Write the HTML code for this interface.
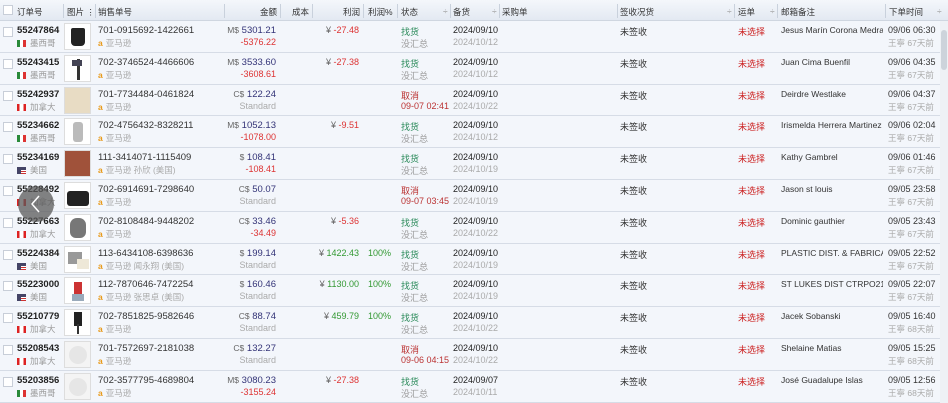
<!DOCTYPE html>
<html><head><meta charset="utf-8"><style>
*{margin:0;padding:0;box-sizing:border-box}
body{width:948px;height:403px;overflow:hidden;background:#f3f6fb;font-family:"Liberation Sans","Noto Sans CJK SC",sans-serif;font-size:9px;color:#333;position:relative}
.hd{position:absolute;left:0;top:0;width:948px;height:21px;background:linear-gradient(#f4f7fb,#e3e9f2);border-bottom:1px solid #cfd6e0}
.hd span{position:absolute;top:6px;font-size:8.5px;color:#333}
.hd i{position:absolute;top:4px;width:1px;height:14px;background:#c9d1dc}
.r{position:absolute;left:0;width:940px;height:31.8px;border-bottom:1px solid #d6dce6;background:#f3f6fb}
.r span{position:absolute;white-space:nowrap}
.t{top:4px}.b{top:16px}
.cb{left:3px;top:6px;width:10px;height:10px;border:1px solid #c8ced8;background:#fff}
.on{left:17px;font-weight:bold;color:#222;font-size:9.5px}
.fl{left:17px;width:9px;height:7px;top:19px!important}
.mx{background:linear-gradient(90deg,#2a8a3a 33%,#fff 33% 66%,#d33 66%)}
.ca{background:linear-gradient(90deg,#d22 28%,#fff 28% 72%,#d22 72%)}
.us{background:repeating-linear-gradient(#c33 0 1px,#fff 1px 2px);box-shadow:inset 4px 3px 0 #446}
.cn{left:30px;color:#999;font-size:8.5px}
.im{left:64px;top:2px;width:27px;height:27px;background:#fff;border:1px solid #ddd}
.so{left:98px;color:#333;font-size:9.5px}
.am{left:98px;color:#aaa;font-size:8.5px}
.am b{color:#e89a1a;font-weight:bold;margin-right:3px}
.amt{right:664px;color:#337;font-size:9.5px}
.amt em{font-style:normal;color:#666;font-size:8.5px}
.neg{right:664px;color:#d33}
.std{right:664px;color:#aaa}
.pf{right:581px;color:#666}
.pf em{font-style:normal;color:#d33}
.pf .g{color:#393}
.pc{left:368px;color:#393}
.st{left:401px;color:#2a8a5a}
.st.x{color:#b33}
.sb{left:401px;color:#999}
.sb.x{color:#b33}
.d1{left:453px;color:#222}
.d2{left:453px;color:#aaa}
.qs{left:620px;color:#333}
.ys{left:738px;color:#c22}
.em{left:781px;color:#333;font-size:8.5px;width:102px;overflow:hidden}
.tm{left:888px;color:#333;font-size:9px}
.tb{left:888px;color:#aaa;font-size:8.5px}
</style></head><body>
<div class="hd">
<span style="left:3px;top:5px;width:10px;height:10px;border:1px solid #c8ced8;background:#fff"></span>
<span style="left:17px">订单号</span><i style="left:63px"></i>
<span style="left:67px">图片 ⋮</span><i style="left:95px"></i>
<span style="left:98px">销售单号</span><i style="left:224px"></i>
<span style="left:260px">金额</span><i style="left:280px"></i>
<span style="left:292px">成本</span><i style="left:312px"></i>
<span style="left:343px">利润</span><i style="left:363px"></i>
<span style="left:368px">利润%</span><i style="left:397px"></i>
<span style="left:401px">状态</span><span style="left:443px;color:#999">÷</span><i style="left:450px"></i>
<span style="left:453px">备货</span><span style="left:492px;color:#999">÷</span><i style="left:499px"></i>
<span style="left:502px">采购单</span><i style="left:617px"></i>
<span style="left:620px">签收况货</span><span style="left:727px;color:#999">÷</span><i style="left:734px"></i>
<span style="left:738px">运单</span><span style="left:770px;color:#999">÷</span><i style="left:777px"></i>
<span style="left:781px">邮箱备注</span><i style="left:885px"></i>
<span style="left:889px">下单时间</span><span style="left:937px;color:#999">÷</span>
</div>

<div class="r" style="top:21px"><span class="cb"></span><span class="t on">55247864</span><span class="b fl mx"></span><span class="b cn">墨西哥</span><span class="im"><span style="left:6px;top:4px;width:14px;height:18px;background:#222;border-radius:2px 2px 4px 4px"></span></span><span class="t so">701-0915692-1422661</span><span class="b am"><b>a</b>亚马逊</span><span class="t amt"><em>M$</em> 5301.21</span><span class="b neg">-5376.22</span><span class="t pf">¥ <em>-27.48</em></span><span class="t st">找货</span><span class="b sb">没汇总</span><span class="t d1">2024/09/10</span><span class="b d2">2024/10/12</span><span class="t qs">未签收</span><span class="t ys">未选择</span><span class="t em">Jesus Marín Corona Medrar</span><span class="t tm">09/06 06:30</span><span class="b tb">王寧 67天前</span></div>

<div class="r" style="top:52.8px"><span class="cb"></span><span class="t on">55243415</span><span class="b fl mx"></span><span class="b cn">墨西哥</span><span class="im"><span style="left:12px;top:3px;width:3px;height:21px;background:#333"></span><span style="left:7px;top:4px;width:10px;height:6px;background:#445"></span></span><span class="t so">702-3746524-4466606</span><span class="b am"><b>a</b>亚马逊</span><span class="t amt"><em>M$</em> 3533.60</span><span class="b neg">-3608.61</span><span class="t pf">¥ <em>-27.38</em></span><span class="t st">找货</span><span class="b sb">没汇总</span><span class="t d1">2024/09/10</span><span class="b d2">2024/10/12</span><span class="t qs">未签收</span><span class="t ys">未选择</span><span class="t em">Juan Cima Buenfil</span><span class="t tm">09/06 04:35</span><span class="b tb">王寧 67天前</span></div>

<div class="r" style="top:84.6px"><span class="cb"></span><span class="t on">55242937</span><span class="b fl ca"></span><span class="b cn">加拿大</span><span class="im" style="background:#e8dcc4"></span><span class="t so">701-7734484-0461824</span><span class="b am"><b>a</b>亚马逊</span><span class="t amt"><em>C$</em> 122.24</span><span class="b std">Standard</span><span class="t st x">取消</span><span class="b sb x">09-07 02:41</span><span class="t d1">2024/09/10</span><span class="b d2">2024/10/22</span><span class="t qs">未签收</span><span class="t ys">未选择</span><span class="t em">Deirdre Westlake</span><span class="t tm">09/06 04:37</span><span class="b tb">王寧 67天前</span></div>

<div class="r" style="top:116.4px"><span class="cb"></span><span class="t on">55234662</span><span class="b fl mx"></span><span class="b cn">墨西哥</span><span class="im"><span style="left:8px;top:3px;width:10px;height:20px;background:#bbb;border-radius:3px"></span></span><span class="t so">702-4756432-8328211</span><span class="b am"><b>a</b>亚马逊</span><span class="t amt"><em>M$</em> 1052.13</span><span class="b neg">-1078.00</span><span class="t pf">¥ <em>-9.51</em></span><span class="t st">找货</span><span class="b sb">没汇总</span><span class="t d1">2024/09/10</span><span class="b d2">2024/10/12</span><span class="t qs">未签收</span><span class="t ys">未选择</span><span class="t em">Irismelda Herrera Martinez</span><span class="t tm">09/06 02:04</span><span class="b tb">王寧 67天前</span></div>

<div class="r" style="top:148.2px"><span class="cb"></span><span class="t on">55234169</span><span class="b fl us"></span><span class="b cn">美国</span><span class="im" style="background:#a0523a"></span><span class="t so">111-3414071-1115409</span><span class="b am"><b>a</b>亚马逊 孙欣 (美国)</span><span class="t amt"><em>$</em> 108.41</span><span class="b neg">-108.41</span><span class="t st">找货</span><span class="b sb">没汇总</span><span class="t d1">2024/09/10</span><span class="b d2">2024/10/19</span><span class="t qs">未签收</span><span class="t ys">未选择</span><span class="t em">Kathy Gambrel</span><span class="t tm">09/06 01:46</span><span class="b tb">王寧 67天前</span></div>

<div class="r" style="top:180px"><span class="cb"></span><span class="t on">55228492</span><span class="b fl ca"></span><span class="b cn">加拿大</span><span class="im"><span style="left:2px;top:8px;width:22px;height:15px;background:#222;border-radius:3px"></span></span><span class="t so">702-6914691-7298640</span><span class="b am"><b>a</b>亚马逊</span><span class="t amt"><em>C$</em> 50.07</span><span class="b std">Standard</span><span class="t st x">取消</span><span class="b sb x">09-07 03:45</span><span class="t d1">2024/09/10</span><span class="b d2">2024/10/19</span><span class="t qs">未签收</span><span class="t ys">未选择</span><span class="t em">Jason st louis</span><span class="t tm">09/05 23:58</span><span class="b tb">王寧 67天前</span></div>

<div class="r" style="top:211.8px"><span class="cb"></span><span class="t on">55227663</span><span class="b fl ca"></span><span class="b cn">加拿大</span><span class="im"><span style="left:5px;top:3px;width:16px;height:20px;background:#777;border-radius:7px 7px 6px 6px"></span></span><span class="t so">702-8108484-9448202</span><span class="b am"><b>a</b>亚马逊</span><span class="t amt"><em>C$</em> 33.46</span><span class="b neg">-34.49</span><span class="t pf">¥ <em>-5.36</em></span><span class="t st">找货</span><span class="b sb">没汇总</span><span class="t d1">2024/09/10</span><span class="b d2">2024/10/22</span><span class="t qs">未签收</span><span class="t ys">未选择</span><span class="t em">Dominic gauthier</span><span class="t tm">09/05 23:43</span><span class="b tb">王寧 67天前</span></div>

<div class="r" style="top:243.6px"><span class="cb"></span><span class="t on">55224384</span><span class="b fl us"></span><span class="b cn">美国</span><span class="im"><span style="left:3px;top:5px;width:14px;height:12px;background:#999"></span><span style="left:12px;top:12px;width:12px;height:10px;background:#eee8d8"></span></span><span class="t so">113-6434108-6398636</span><span class="b am"><b>a</b>亚马逊 闻永翔 (美国)</span><span class="t amt"><em>$</em> 199.14</span><span class="b std">Standard</span><span class="t pf">¥ <em class="g">1422.43</em></span><span class="t pc">100%</span><span class="t st">找货</span><span class="b sb">没汇总</span><span class="t d1">2024/09/10</span><span class="b d2">2024/10/19</span><span class="t qs">未签收</span><span class="t ys">未选择</span><span class="t em">PLASTIC DIST. &amp; FABRICATC</span><span class="t tm">09/05 22:52</span><span class="b tb">王寧 67天前</span></div>

<div class="r" style="top:275.4px"><span class="cb"></span><span class="t on">55223000</span><span class="b fl us"></span><span class="b cn">美国</span><span class="im"><span style="left:9px;top:4px;width:8px;height:12px;background:#c33"></span><span style="left:7px;top:16px;width:12px;height:7px;background:#9ab"></span></span><span class="t so">112-7870646-7472254</span><span class="b am"><b>a</b>亚马逊 张思卓 (美国)</span><span class="t amt"><em>$</em> 160.46</span><span class="b std">Standard</span><span class="t pf">¥ <em class="g">1130.00</em></span><span class="t pc">100%</span><span class="t st">找货</span><span class="b sb">没汇总</span><span class="t d1">2024/09/10</span><span class="b d2">2024/10/19</span><span class="t qs">未签收</span><span class="t ys">未选择</span><span class="t em">ST LUKES DIST CTRPO21331</span><span class="t tm">09/05 22:07</span><span class="b tb">王寧 67天前</span></div>

<div class="r" style="top:307.2px"><span class="cb"></span><span class="t on">55210779</span><span class="b fl ca"></span><span class="b cn">加拿大</span><span class="im"><span style="left:9px;top:2px;width:8px;height:14px;background:#222"></span><span style="left:12px;top:14px;width:2px;height:10px;background:#333"></span></span><span class="t so">702-7851825-9582646</span><span class="b am"><b>a</b>亚马逊</span><span class="t amt"><em>C$</em> 88.74</span><span class="b std">Standard</span><span class="t pf">¥ <em class="g">459.79</em></span><span class="t pc">100%</span><span class="t st">找货</span><span class="b sb">没汇总</span><span class="t d1">2024/09/10</span><span class="b d2">2024/10/22</span><span class="t qs">未签收</span><span class="t ys">未选择</span><span class="t em">Jacek Sobanski</span><span class="t tm">09/05 16:40</span><span class="b tb">王寧 68天前</span></div>

<div class="r" style="top:339px"><span class="cb"></span><span class="t on">55208543</span><span class="b fl ca"></span><span class="b cn">加拿大</span><span class="im" style="background:#f4f4f4"><span style="left:4px;top:4px;width:18px;height:18px;border-radius:50%;background:#e6e6e6"></span></span><span class="t so">701-7572697-2181038</span><span class="b am"><b>a</b>亚马逊</span><span class="t amt"><em>C$</em> 132.27</span><span class="b std">Standard</span><span class="t st x">取消</span><span class="b sb x">09-06 04:15</span><span class="t d1">2024/09/10</span><span class="b d2">2024/10/22</span><span class="t qs">未签收</span><span class="t ys">未选择</span><span class="t em">Shelaine Matias</span><span class="t tm">09/05 15:25</span><span class="b tb">王寧 68天前</span></div>

<div class="r" style="top:370.8px"><span class="cb"></span><span class="t on">55203856</span><span class="b fl mx"></span><span class="b cn">墨西哥</span><span class="im" style="background:#f4f4f4"><span style="left:4px;top:4px;width:18px;height:18px;border-radius:50%;background:#e6e6e6"></span></span><span class="t so">702-3577795-4689804</span><span class="b am"><b>a</b>亚马逊</span><span class="t amt"><em>M$</em> 3080.23</span><span class="b neg">-3155.24</span><span class="t pf">¥ <em>-27.38</em></span><span class="t st">找货</span><span class="b sb">没汇总</span><span class="t d1">2024/09/07</span><span class="b d2">2024/10/11</span><span class="t qs">未签收</span><span class="t ys">未选择</span><span class="t em">José Guadalupe Islas</span><span class="t tm">09/05 12:56</span><span class="b tb">王寧 68天前</span></div>

<div style="position:absolute;left:940px;top:21px;width:8px;height:382px;background:#eef1f5"></div>
<div style="position:absolute;left:941px;top:30px;width:6px;height:40px;background:#cdd3db;border-radius:3px"></div>
<div style="position:absolute;left:18px;top:186px;width:36px;height:36px;border-radius:50%;background:rgba(90,90,90,0.75)"><svg width="36" height="36"><path d="M21 10 L14 18 L21 26" stroke="#fff" stroke-width="1.5" fill="none"/></svg></div>
</body></html>
